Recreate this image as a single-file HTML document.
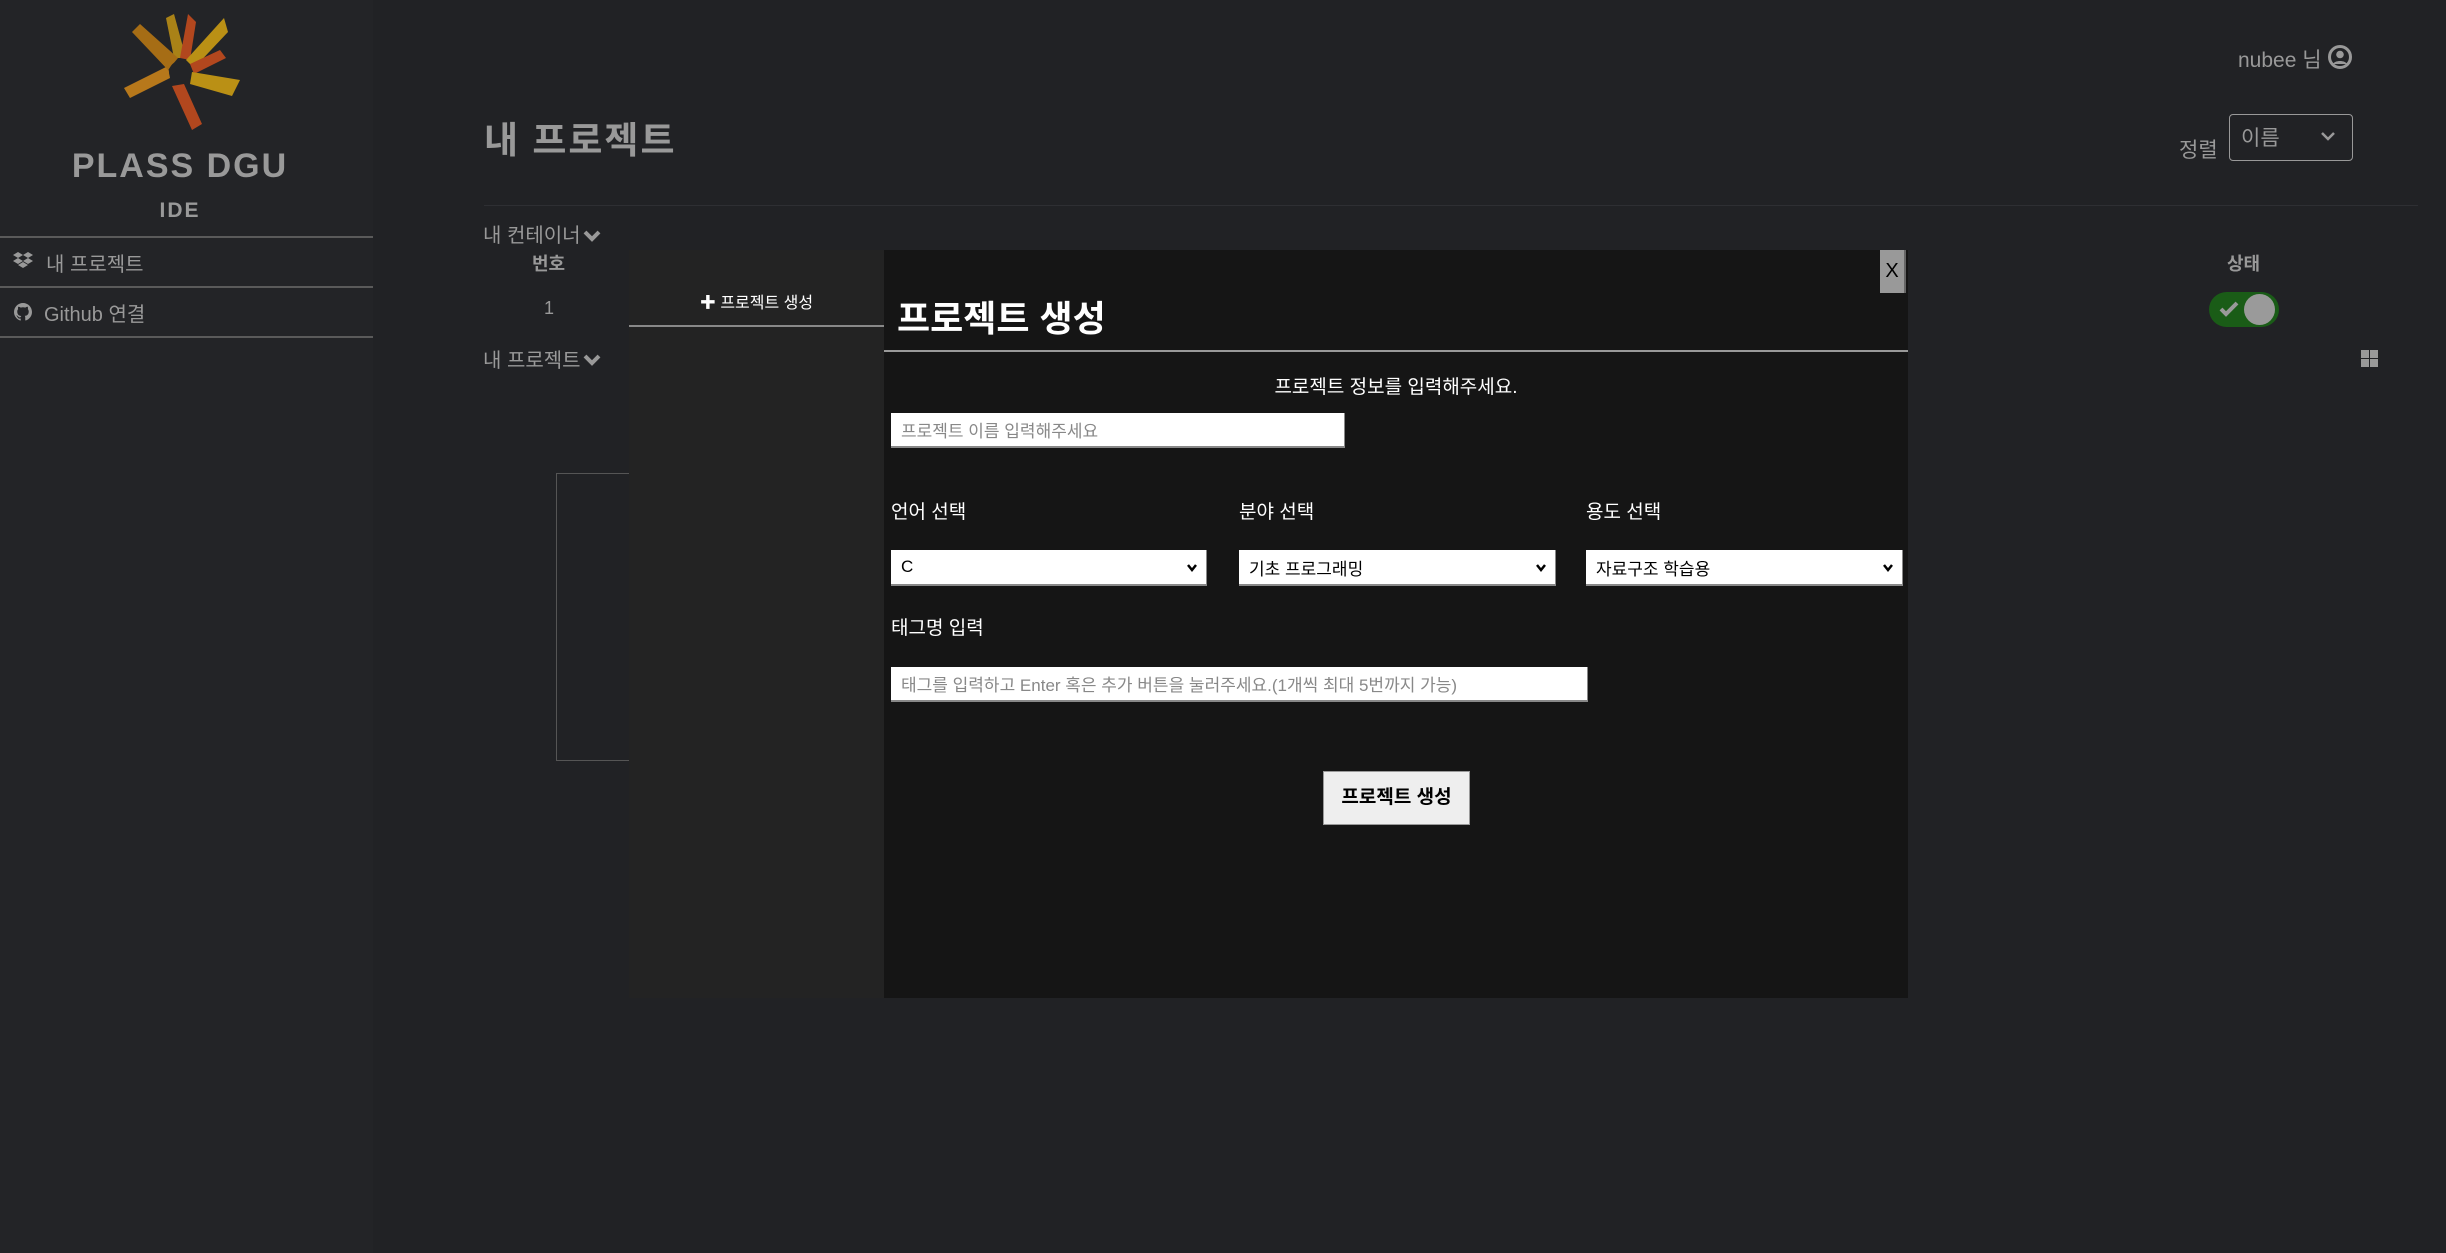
<!DOCTYPE html>
<html><head><meta charset="utf-8"><style>
*{margin:0;padding:0;box-sizing:border-box}
body{width:2446px;height:1253px;background:#212225;font-family:"Liberation Sans","Noto Sans CJK KR",sans-serif;position:relative;overflow:hidden;color:#999}
.a{position:absolute;white-space:nowrap}
.side{position:absolute;left:0;top:0;width:373px;height:1253px;background:#232427}
.hl{position:absolute;height:2px;background:#555}
.sel{position:absolute;background:#fff;border-bottom:2px solid #888;border-right:1px solid #888;color:#000;font-size:17px;padding:0 0 0 10px;display:flex;align-items:center}
.sel svg{position:absolute;right:8px;top:13px}
.lab{position:absolute;color:#fff;font-size:19px}
</style></head><body>
<div class="side"></div>
<svg class="a" style="left:115px;top:12px" width="130" height="120" viewBox="-65 -60 130 120">
<g opacity=".92">
<polygon points="-6,-14 -14,-54 -6,-58 6,-14" fill="#b58a16"/>
<polygon points="0,-14 8,-58 16,-50 10,-12" fill="#bf4a1e"/>
<polygon points="6,-12 44,-54 48,-40 14,-4" fill="#c79a14"/>
<polygon points="10,-8 40,-22 46,-14 14,2" fill="#bf4a1e"/>
<polygon points="12,0 60,8 52,24 10,12" fill="#c79a14"/>
<polygon points="4,12 22,52 12,58 -8,14" fill="#bf4a1e"/>
<polygon points="-10,6 -50,26 -56,16 -12,-6" fill="#c4801a"/>
<polygon points="-12,-2 -48,-40 -40,-48 -2,-14" fill="#b27414"/>
</g>
<circle cx="0" cy="0" r="11" fill="#232427"/>
</svg>
<div class="a" style="left:0;width:360px;text-align:center;top:147px;font-size:34px;font-weight:bold;color:#999;letter-spacing:2px">PLASS DGU</div>
<div class="a" style="left:0;width:360px;text-align:center;top:199px;font-size:21px;font-weight:bold;color:#999;letter-spacing:2px">IDE</div>
<div class="hl" style="left:0;width:373px;top:236px;background:#5a5a5a"></div>
<div class="hl" style="left:0;width:373px;top:286px;background:#5a5a5a"></div>
<div class="hl" style="left:0;width:373px;top:336px;background:#5a5a5a"></div>
<svg class="a" style="left:13px;top:252px" width="20" height="18" viewBox="0 0 20 18"><path fill="#999" d="M5 0l5 3-5 3-5-3zM15 0l5 3-5 3-5-3zM0 9l5-3 5 3-5 3zM10 9l5-3 5 3-5 3zM5 13l5-3 5 3-5 3z"/></svg>
<div class="a" style="left:46px;top:248px;font-size:20px">내 프로젝트</div>
<svg class="a" style="left:14px;top:303px" width="18" height="18" viewBox="0 0 16 16"><path fill="#999" d="M8 0C3.6 0 0 3.6 0 8c0 3.5 2.3 6.5 5.5 7.6.4.1.5-.2.5-.4v-1.4c-2.2.5-2.7-1-2.7-1-.4-.9-.9-1.2-.9-1.2-.7-.5.1-.5.1-.5.8.1 1.2.8 1.2.8.7 1.300 1.9.9 2.3.7.1-.5.3-.9.5-1.1-1.8-.2-3.6-.9-3.600-4 0-.9.3-1.6.8-2.1-.1-.2-.4-1 .1-2.1 0 0 .7-.2 2.2.8.6-.2 1.3-.3 2-.3s1.4.1 2 .3c1.5-1 2.2-.8 2.2-.8.4 1.1.2 1.9.1 2.1.5.6.8 1.3.8 2.1 0 3.1-1.9 3.7-3.6 3.9.3.3.5.8.5 1.5v2.2c0 .2.1.5.6.4C13.7 14.5 16 11.5 16 8c0-4.4-3.6-8-8-8z"/></svg>
<div class="a" style="left:44px;top:298px;font-size:20px">Github 연결</div>

<div class="a" style="left:484px;top:110px;font-size:37px;font-weight:bold;color:#999;letter-spacing:2px">내 프로젝트</div>
<div class="a" style="left:2238px;top:44px;font-size:21px">nubee 님</div>
<svg class="a" style="left:2328px;top:45px" width="24" height="24" viewBox="0 0 24 24"><circle cx="12" cy="12" r="10.5" fill="none" stroke="#999" stroke-width="3"/><circle cx="12" cy="9.5" r="3.8" fill="#999"/><path d="M5 19c2-4 12-4 14 0" fill="#999"/></svg>
<div class="a" style="left:2179px;top:134px;font-size:21px">정렬</div>
<div class="a" style="left:2229px;top:114px;width:124px;height:47px;border:1.5px solid #999;border-radius:4px"></div>
<div class="a" style="left:2241px;top:122px;font-size:21px">이름</div>
<svg class="a" style="left:2320px;top:130px" width="16" height="12" viewBox="0 0 16 12"><path d="M2 3l6 6 6-6" stroke="#999" stroke-width="2.5" fill="none"/></svg>
<div class="hl" style="left:484px;width:1934px;top:205px;height:1px;background:#2e2f33"></div>
<div class="a" style="left:483px;top:219px;font-size:20px">내 컨테이너</div>
<svg class="a" style="left:583px;top:229px" width="18" height="14" viewBox="0 0 18 14"><path d="M2 3l7 7 7-7" stroke="#999" stroke-width="4" fill="none"/></svg>
<div class="a" style="left:532px;top:250px;font-size:18px;font-weight:bold">번호</div>
<div class="a" style="left:544px;top:298px;font-size:18px">1</div>
<div class="a" style="left:483px;top:344px;font-size:20px">내 프로젝트</div>
<svg class="a" style="left:583px;top:353px" width="18" height="14" viewBox="0 0 18 14"><path d="M2 3l7 7 7-7" stroke="#999" stroke-width="4" fill="none"/></svg>
<div class="a" style="left:2227px;top:250px;font-size:18px;font-weight:bold">상태</div>
<div class="a" style="left:2209px;top:292px;width:70px;height:35px;border-radius:18px;background:#1a5c17"></div>
<div class="a" style="left:2244px;top:294px;width:31px;height:31px;border-radius:50%;background:#9a9a9a"></div>
<svg class="a" style="left:2218px;top:300px" width="22" height="18" viewBox="0 0 22 18"><path d="M3 9l5 5 11-11" stroke="#999" stroke-width="4" fill="none"/></svg>
<div class="a" style="left:2361px;top:350px;width:8px;height:8px;background:#999"></div>
<div class="a" style="left:2370px;top:350px;width:8px;height:8px;background:#999"></div>
<div class="a" style="left:2361px;top:359px;width:8px;height:8px;background:#999"></div>
<div class="a" style="left:2370px;top:359px;width:8px;height:8px;background:#999"></div>
<div class="a" style="left:556px;top:473px;width:80px;height:288px;border:1px solid #555"></div>

<div class="a" style="left:629px;top:250px;width:255px;height:748px;background:#232323"></div>
<div class="a" style="left:629px;top:289px;width:255px;text-align:center;color:#fff;font-size:16px">✚ 프로젝트 생성</div>
<div class="hl" style="left:629px;width:255px;top:325px;background:#888"></div>
<div class="a" style="left:884px;top:250px;width:1024px;height:748px;background:#151515"></div>
<div class="a" style="left:1880px;top:250px;width:26px;height:43px;background:#999;border-right:2px solid #666;color:#000;font-size:20px;text-align:center;line-height:43px">X</div>
<div class="a" style="left:897px;top:290px;font-size:36px;font-weight:bold;color:#fff">프로젝트 생성</div>
<div class="hl" style="left:884px;width:1024px;top:350px;background:#999"></div>
<div class="a" style="left:884px;width:1024px;text-align:center;top:372px;font-size:19px;color:#fff">프로젝트 정보를 입력해주세요.</div>
<div class="sel" style="left:891px;top:413px;width:454px;height:35px;color:#888">프로젝트 이름 입력해주세요</div>
<div class="lab" style="left:891px;top:497px">언어 선택</div>
<div class="lab" style="left:1239px;top:497px">분야 선택</div>
<div class="lab" style="left:1586px;top:497px">용도 선택</div>
<div class="sel" style="left:891px;top:550px;width:316px;height:36px">C<svg width="12" height="10" viewBox="0 0 12 10"><path d="M2 2l4 5 4-5" stroke="#000" stroke-width="2.5" fill="none"/></svg></div>
<div class="sel" style="left:1239px;top:550px;width:317px;height:36px">기초 프로그래밍<svg width="12" height="10" viewBox="0 0 12 10"><path d="M2 2l4 5 4-5" stroke="#000" stroke-width="2.5" fill="none"/></svg></div>
<div class="sel" style="left:1586px;top:550px;width:317px;height:36px">자료구조 학습용<svg width="12" height="10" viewBox="0 0 12 10"><path d="M2 2l4 5 4-5" stroke="#000" stroke-width="2.5" fill="none"/></svg></div>
<div class="lab" style="left:891px;top:613px">태그명 입력</div>
<div class="sel" style="left:891px;top:667px;width:697px;height:35px;color:#888">태그를 입력하고 Enter 혹은 추가 버튼을 눌러주세요.(1개씩 최대 5번까지 가능)</div>
<div class="a" style="left:1323px;top:771px;width:147px;height:54px;background:#eee;border:1px solid #999;color:#000;font-weight:bold;font-size:19px;text-align:center;line-height:52px">프로젝트 생성</div>
</body></html>
